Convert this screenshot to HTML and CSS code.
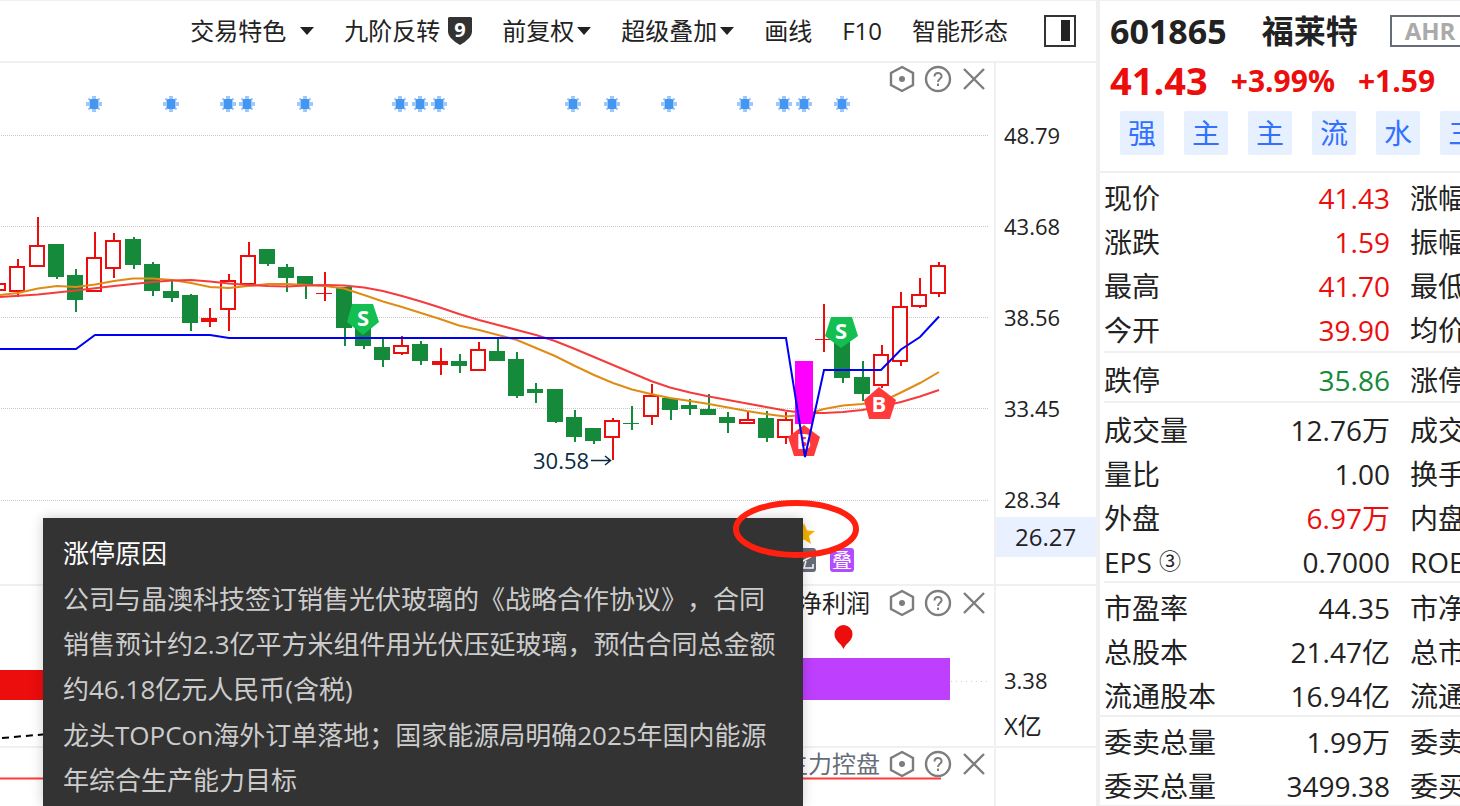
FILE: index.html
```html
<!DOCTYPE html>
<html lang="zh-CN">
<head>
    <meta charset="UTF-8">
    <meta name="viewport" content="width=device-width, initial-scale=1.0">
    <title>福莱特 601865</title>
    <link rel="stylesheet" href="styles.css">
</head>
<body>
    <!-- shared icons -->
    <svg class="sprite" aria-hidden="true">
        <symbol id="icon-setting" viewBox="0 0 28 28">
            <path d="M14 2 L25 8 V20 L14 26 L3 20 V8 Z" fill="none" stroke="#7d7d7d" stroke-width="2.4"/>
            <circle cx="14" cy="14" r="3" fill="#7d7d7d"/>
        </symbol>
        <symbol id="icon-help" viewBox="0 0 28 28">
            <circle cx="14" cy="14" r="12" fill="none" stroke="#7d7d7d" stroke-width="2.4"/>
            <path d="M10.5 11.5 C10.5 6.8 17.6 6.8 17.6 11.2 C17.6 13.8 14 13.8 14 17" fill="none" stroke="#7d7d7d" stroke-width="2"/>
            <rect x="13" y="18.6" width="2" height="2.4" fill="#7d7d7d"/>
        </symbol>
        <symbol id="icon-close" viewBox="0 0 28 28">
            <path d="M4 4 L24 24 M24 4 L4 24" fill="none" stroke="#7d7d7d" stroke-width="2.4"/>
        </symbol>
        <symbol id="icon-sun" viewBox="0 0 18 18">
            <path d="M9 1 V17 M1 9 H17" stroke="#9cc8fa" stroke-width="4"/>
            <path d="M3.5 3.5 L14.5 14.5 M14.5 3.5 L3.5 14.5" stroke="#8fbff8" stroke-width="2"/>
            <rect x="4" y="5" width="10" height="8" fill="#9cc8fa"/>
            <rect x="5" y="4" width="8" height="10" rx="1" fill="#4595f2"/>
        </symbol>
    </svg>

    <div class="app">
        <main class="main">
            <nav class="toolbar">
                <button class="tool wide-caret">交易特色<span class="caret"></span></button>
                <button class="tool">九阶反转
                    <svg class="nine" width="24" height="28" viewBox="0 0 24 28">
                        <path d="M1 0 H23 L24 1 V15 Q24 21 12 28 Q0 21 0 15 V1 Z" fill="#333"/>
                        <text x="12" y="20" text-anchor="middle" class="nine-text">9</text>
                    </svg>
                </button>
                <button class="tool">前复权<span class="caret"></span></button>
                <button class="tool">超级叠加<span class="caret"></span></button>
                <button class="tool">画线</button>
                <button class="tool">F10</button>
                <button class="tool">智能形态</button>
                <button class="tool layout-btn" aria-label="侧栏">
                    <svg width="32" height="32" viewBox="0 0 32 32">
                        <rect x="1" y="1" width="30" height="30" fill="none" stroke="#333" stroke-width="2"/>
                        <rect x="17" y="5" width="9" height="21" fill="#222"/>
                    </svg>
                </button>
            </nav>

            <section class="panel panel-k">
                <div class="plot">
                    <svg class="chart" id="kline" viewBox="0 63 994 521" preserveAspectRatio="xMinYMin meet">
                        <g class="grid">
                            <path d="M1 135.5 H988 M1 226.5 H988 M1 317.5 H988 M1 408.5 H988 M1 500.5 H988"/>
                        </g>
                        <g id="suns"></g>
                        <g id="candles" shape-rendering="crispEdges"></g>
                        <polyline class="ma ma-orange" points="0,295 18,293 38,288.5 57,286 76,287 95,284.5 114,281 133,278.5 153,278.5 172,280 191,283 210,287 229,288 248,286 268,284 287,284 306,285 325,286 344,288.5 364,295 383,301.5 402,307 421,313 440,319 459,325.5 479,330 498,335 517,340 536,348 555,356 575,366 594,375 613,383 632,389.5 651,394 670,398 690,401 709,404 728,407.5 747,411 766,414 785,416.5 804,415 824,409 843,405.5 862,404 881,402 901,392.5 920,383 939,372"/>
                        <polyline class="ma ma-red" points="0,297 38,294.5 76,290.5 114,286 133,284 153,282 172,280.5 191,280 210,281.5 229,283.5 248,285 268,286 287,286.5 306,285.5 325,285 344,285.5 364,287.5 383,291 402,296 421,301.5 440,307.5 459,314 479,320 498,325 517,330 536,335 555,341 575,349 594,357 613,365 632,373 651,381 670,387.5 690,392.5 709,396.5 728,400 747,403.5 766,407 785,410.5 804,413 824,413 843,412 862,410 881,406.5 901,402 920,396.5 939,390"/>
                        <rect x="795" y="361" width="18" height="63" fill="#f0f"/>

                        <!-- buy / sell marks -->
                        <path d="M352 304 H373 L379 322 L363 335 L347 322 Z" fill="#12bf50"/>
                        <text class="mark" x="363" y="326">S</text>
                        <path d="M831 317 H852 L858 336 L841 348 L825 336 Z" fill="#12bf50"/>
                        <text class="mark" x="841" y="339">S</text>
                        <path d="M804 425 L820 437 L814 456 H794 L788 437 Z" fill="#ff3a3a"/>
                        <text class="mark" x="804" y="449">B</text>
                        <path d="M879 387 L896 400 L890 419 H869 L864 400 Z" fill="#ff3a3a"/>
                        <text class="mark" x="879" y="412">B</text>
                        <polyline class="ma ma-blue" points="0,349 76,349 95,335 210,335 229,338 786,338 805,457 824,370 881,370 901,349.5 920,337 939,316.5"/>

                        <text class="low" x="533" y="469">30.58</text>
                        <path d="M591 460.5 H610 M605 456 L610.5 460.5 L605 465" fill="none" stroke="#0b2b42" stroke-width="1.5"/>

                        <!-- event badges -->
                        <path d="M804 523 L807 530.5 L815 531 L809 536 L811 544 L804 539.5 L797 544 L799 536 L793 531 L801 530.5 Z" fill="#f5b301"/>
                        <rect x="792" y="548" width="24" height="24" rx="3" fill="#666c78"/>
                        <path d="M796 565 L812 556 M800 553 H809 M806 561 L804 568 H813 V564" fill="none" stroke="#fff" stroke-width="1.5"/>
                        <rect x="830" y="548" width="24" height="24" rx="3" fill="#b14dff"/>
                        <text class="badge" x="842" y="568">叠</text>
                    </svg>
                    <div class="panel-head">
                        <button class="icon-btn" aria-label="设置"><svg width="28" height="28"><use href="#icon-setting"/></svg></button>
                        <button class="icon-btn" aria-label="帮助"><svg width="28" height="28"><use href="#icon-help"/></svg></button>
                        <button class="icon-btn" aria-label="关闭"><svg width="28" height="28"><use href="#icon-close"/></svg></button>
                    </div>
                </div>
                <div class="axis axis-price">
                    <span>48.79</span>
                    <span>43.68</span>
                    <span>38.56</span>
                    <span>33.45</span>
                    <span>28.34</span>
                    <b class="cursor-price">26.27</b>
                </div>
            </section>

            <section class="panel panel-profit">
                <div class="plot">
                    <svg class="chart" viewBox="0 586 994 160" preserveAspectRatio="xMinYMin meet">
                        <path d="M951 681.5 H988" stroke="#d0d0d0" stroke-dasharray="1 4"/>
                        <rect x="0" y="670" width="500" height="30" fill="#ec0d0d"/>
                        <rect x="500" y="658" width="450" height="42" fill="#bf3fff"/>
                        <path d="M2 738 L60 733" stroke="#000" stroke-width="2" stroke-dasharray="7 5"/>
                        <path d="M843.5 649 C841 643 834.5 641 834.5 634 A9 9 0 0 1 852.5 634 C852.5 641 846 643 843.5 649 Z" fill="#ec0d0d"/>
                    </svg>
                    <div class="panel-head">
                        <h2>净利润</h2>
                        <button class="icon-btn" aria-label="设置"><svg width="28" height="28"><use href="#icon-setting"/></svg></button>
                        <button class="icon-btn" aria-label="帮助"><svg width="28" height="28"><use href="#icon-help"/></svg></button>
                        <button class="icon-btn" aria-label="关闭"><svg width="28" height="28"><use href="#icon-close"/></svg></button>
                    </div>
                </div>
                <div class="axis axis-profit">
                    <span>3.38</span>
                    <span class="unit">X亿</span>
                </div>
            </section>

            <section class="panel panel-control">
                <div class="plot">
                    <svg class="chart" viewBox="0 748 994 58" preserveAspectRatio="xMinYMin meet">
                        <path d="M0 778.5 H941" stroke="#ff3a3a" stroke-width="2"/>
                    </svg>
                    <div class="panel-head">
                        <h2 class="muted">主力控盘</h2>
                        <button class="icon-btn" aria-label="设置"><svg width="28" height="28"><use href="#icon-setting"/></svg></button>
                        <button class="icon-btn" aria-label="帮助"><svg width="28" height="28"><use href="#icon-help"/></svg></button>
                        <button class="icon-btn" aria-label="关闭"><svg width="28" height="28"><use href="#icon-close"/></svg></button>
                    </div>
                </div>
                <div class="axis"></div>
            </section>

            <div class="tooltip" role="tooltip">
                <h3>涨停原因</h3>
                <p>公司与晶澳科技签订销售光伏玻璃的《战略合作协议》，合同销售预计约2.3亿平方米组件用光伏压延玻璃，预估合同总金额约46.18亿元人民币(含税)</p>
                <p>龙头TOPCon海外订单落地；国家能源局明确2025年国内能源年综合生产能力目标</p>
            </div>
            <svg class="circle-note" width="128" height="60" viewBox="0 0 128 60">
                <ellipse cx="64" cy="30" rx="60" ry="26" fill="none" stroke="#ff2010" stroke-width="6"/>
            </svg>
        </main>

        <aside class="sidebar">
            <header class="stock">
                <div class="stock-name">
                    <span class="code">601865</span>
                    <h1>福莱特</h1>
                    <button class="ahr">AHR</button>
                </div>
                <div class="stock-price">
                    <span class="price">41.43</span>
                    <span class="change">+3.99%</span>
                    <span class="change">+1.59</span>
                </div>
                <div class="tags">
                    <button class="tag">强</button>
                    <button class="tag">主</button>
                    <button class="tag">主</button>
                    <button class="tag">流</button>
                    <button class="tag">水</button>
                    <button class="tag">三</button>
                </div>
            </header>

            <table class="quote">
                <tr><th scope="row">现价</th><td class="up">41.43</td><th scope="row">涨幅</th></tr>
                <tr><th scope="row">涨跌</th><td class="up">1.59</td><th scope="row">振幅</th></tr>
                <tr><th scope="row">最高</th><td class="up">41.70</td><th scope="row">最低</th></tr>
                <tr><th scope="row">今开</th><td class="up">39.90</td><th scope="row">均价</th></tr>
            </table>
            <table class="quote quote-limit">
                <tr><th scope="row">跌停</th><td class="down">35.86</td><th scope="row">涨停</th></tr>
            </table>
            <table class="quote quote-volume">
                <tr><th scope="row">成交量</th><td>12.76万</td><th scope="row">成交</th></tr>
                <tr><th scope="row">量比</th><td>1.00</td><th scope="row">换手</th></tr>
                <tr><th scope="row">外盘</th><td class="up">6.97万</td><th scope="row">内盘</th></tr>
                <tr><th scope="row">EPS <small>③</small></th><td>0.7000</td><th scope="row">ROE</th></tr>
            </table>
            <table class="quote quote-flush">
                <tr><th scope="row">市盈率</th><td>44.35</td><th scope="row">市净</th></tr>
                <tr><th scope="row">总股本</th><td>21.47亿</td><th scope="row">总市</th></tr>
                <tr><th scope="row">流通股本</th><td>16.94亿</td><th scope="row">流通</th></tr>
            </table>
            <table class="quote quote-flush">
                <tr><th scope="row">委卖总量</th><td>1.99万</td><th scope="row">委卖</th></tr>
                <tr><th scope="row">委买总量</th><td>3499.38</td><th scope="row">委买</th></tr>
            </table>
        </aside>
    </div>

    <script>
        const NS = 'http://www.w3.org/2000/svg';
        const RED = '#ec0d0d';
        const GREEN = '#158a3a';

        // [direction, body top, body bottom, high, low]
        const candles = [
            ['u', 283, 291, 283, 291], ['u', 266, 292, 259, 297], ['u', 245, 267, 217, 267],
            ['d', 244, 277, 244, 279], ['d', 275, 300, 269, 312], ['u', 257, 292, 232, 292],
            ['u', 240, 269, 233, 278], ['d', 239, 265, 237, 269], ['d', 264, 291, 262, 296],
            ['d', 291, 298, 281, 302], ['d', 295, 323, 294, 331], ['u', 318, 322, 308, 327],
            ['u', 280, 310, 274, 331], ['u', 255, 285, 242, 285], ['d', 249, 264, 249, 266],
            ['d', 267, 278, 264, 292], ['d', 276, 285, 276, 299], ['u', 293, 294, 272, 301],
            ['d', 287, 328, 287, 346], ['d', 318, 346, 318, 349], ['d', 347, 360, 337, 367],
            ['u', 345, 354, 336, 355], ['d', 344, 361, 341, 365], ['u', 361, 365, 348, 375],
            ['d', 361, 366, 354, 373], ['u', 349, 371, 342, 371], ['d', 351, 361, 338, 361],
            ['d', 359, 396, 352, 398], ['d', 389, 393, 383, 403], ['d', 389, 422, 389, 423],
            ['d', 417, 437, 410, 442], ['d', 428, 441, 428, 444], ['u', 420, 438, 418, 460],
            ['d', 423, 424, 406, 430], ['u', 395, 417, 384, 425], ['d', 398, 410, 398, 420],
            ['d', 405, 409, 399, 415], ['d', 409, 415, 394, 415], ['d', 417, 423, 412, 433],
            ['u', 419, 424, 412, 424], ['d', 418, 438, 411, 442], ['u', 419, 438, 412, 444],
            null,
            ['u', 339, 340, 304, 352], ['d', 340, 378, 340, 383], ['d', 377, 394, 361, 401],
            ['u', 354, 386, 345, 388], ['u', 306, 362, 292, 366], ['u', 294, 307, 278, 308],
            ['u', 265, 294, 262, 297]
        ];
        const suns = [94, 171, 228, 247, 305, 400, 420, 439, 573, 612, 669, 745, 784, 804, 842];

        function add(parent, tag, attrs) {
            const el = document.createElementNS(NS, tag);
            for (const key in attrs) {
                el.setAttribute(key, attrs[key]);
            }
            parent.appendChild(el);
        }

        const group = document.getElementById('candles');
        candles.forEach(function(c, i) {
            if (!c) return;
            const [dir, top, bottom, high, low] = c;
            const x = Math.round(18.4 + (i - 1) * 19.1875);
            const color = dir === 'u' ? RED : GREEN;
            add(group, 'rect', { x: x - 1, y: high, width: 2, height: low - high, fill: color });
            add(group, 'rect', { x: x - 9, y: top, width: 16, height: bottom - top, fill: color });
            // rising candles are hollow
            if (dir === 'u' && bottom - top > 4) {
                add(group, 'rect', { x: x - 7, y: top + 2, width: 12, height: bottom - top - 4, fill: '#fff' });
            }
        });

        const sunGroup = document.getElementById('suns');
        suns.forEach(function(x) {
            add(sunGroup, 'use', { href: '#icon-sun', x: x - 9, y: 95, width: 18, height: 18 });
        });
    </script>
</body>
</html>
```
FILE: styles.css
```css
* {
    box-sizing: border-box;
}
body {
    font-family: "Open Sans", "Noto Sans CJK SC", sans-serif;
    font-size: 24px;
    margin: 0;
    color: #222;
    background-color: #fff;
    overflow: hidden;
}
button {
    font: inherit;
    color: inherit;
    background: none;
    border: none;
    padding: 0;
    cursor: pointer;
}
h1, h2, h3, p {
    margin: 0;
    font-weight: normal;
}
svg {
    display: block;
}
.sprite {
    width: 0;
    height: 0;
    position: absolute;
}
.app {
    display: flex;
    height: 100vh;
    border-top: 1px solid #f0f0f0;
}
.main {
    position: relative;
    flex: 1;
    min-width: 0;
    display: flex;
    flex-direction: column;
    overflow: hidden;
}

/* toolbar */
.toolbar {
    display: flex;
    flex: none;
    justify-content: flex-end;
    align-items: center;
    gap: 30px;
    height: 62px;
    padding-right: 20px;
    border-bottom: 2px solid #f0f0f0;
}
.tool {
    display: flex;
    align-items: center;
    white-space: nowrap;
    line-height: 32px;
}
.caret {
    margin-left: 3px;
    border: 7px solid transparent;
    border-top: 8px solid #222;
    border-bottom: 0;
}
.wide-caret .caret {
    margin-left: 14px;
}
.nine {
    margin-left: 8px;
}
.nine-text {
    font-size: 20px;
    font-weight: bold;
    fill: #fff;
}
.layout-btn {
    margin-left: 6px;
}

/* chart panels */
.panel {
    display: flex;
    flex: none;
    border-bottom: 2px solid #f0f0f0;
}
.panel-k {
    height: 523px;
}
.panel-profit {
    height: 162px;
}
.panel-control {
    flex: 1;
    border-bottom: none;
}
.plot {
    flex: 1;
    min-width: 0;
    display: grid;
    overflow: hidden;
}
.chart,
.panel-head {
    grid-area: 1 / 1;
}
.chart {
    width: 100%;
}
.panel-head {
    display: flex;
    justify-content: flex-end;
    align-items: center;
    align-self: start;
    gap: 8px;
    height: 32px;
    padding-right: 6px;
}
.panel-profit .panel-head {
    height: 34px;
}
.panel-head h2 {
    font-size: 24px;
    line-height: 32px;
    margin-right: 10px;
}
.panel-head .muted {
    color: #666c78;
    margin-right: 0;
}
.grid path {
    stroke: #c8c8c8;
    stroke-dasharray: 1 1;
}
.ma {
    fill: none;
    stroke-width: 2;
}
.ma-orange {
    stroke: #e08c14;
}
.ma-red {
    stroke: #f53c3c;
}
.ma-blue {
    stroke: #0000f5;
}
.mark {
    font-size: 22px;
    font-weight: bold;
    text-anchor: middle;
    fill: #fff;
}
.low {
    font-size: 22px;
    fill: #0b2b42;
}
.badge {
    font-size: 20px;
    text-anchor: middle;
    fill: #fff;
}

/* value axis */
.axis {
    position: relative;
    flex: 0 0 102px;
    display: flex;
    flex-direction: column;
    padding-left: 8px;
    border-left: 2px solid #f0f0f0;
    font-size: 22px;
}
.axis-price {
    padding-top: 27px;
}
.axis-price span {
    line-height: 91px;
}
.cursor-price {
    position: absolute;
    left: 0;
    right: 0;
    bottom: 27px;
    padding-left: 19px;
    font-size: 24px;
    font-weight: normal;
    line-height: 40px;
    background-color: #e9f0ff;
}
.axis-profit {
    padding-top: 72px;
    line-height: 45px;
}
.axis .unit {
    font-size: 24px;
}

/* limit-up reason */
.tooltip {
    position: absolute;
    left: 43px;
    top: 517px;
    bottom: 0;
    width: 760px;
    padding: 13px 20px;
    font-size: 26px;
    line-height: 45px;
    text-spacing-trim: space-all;
    color: #ccc;
    background-color: #333;
    box-shadow: 0 0 12px rgba(0, 0, 0, 0.2);
}
.tooltip h3 {
    font-size: 26px;
    color: #fff;
}
.tooltip h3,
.tooltip p {
    margin-bottom: 1px;
}
.circle-note {
    position: absolute;
    left: 732px;
    top: 498px;
}

/* quote sidebar */
.sidebar {
    flex: 0 0 364px;
    min-width: 0;
    border-left: 4px solid #f0f0f0;
    overflow: hidden;
}
.stock {
    height: 172px;
    padding: 6px 0 0 10px;
    border-bottom: 2px solid #f0f0f0;
    font-weight: bold;
    white-space: nowrap;
}
.stock-name,
.stock-price {
    display: flex;
    align-items: center;
    height: 50px;
}
.stock-name {
    height: 48px;
}
.stock-name h1 {
    font-size: 32px;
    font-weight: bold;
    line-height: 46px;
    margin: 0 32px 0 35px;
}
.code {
    font-size: 34px;
}
.ahr {
    flex: none;
    width: 100px;
    height: 32px;
    padding-left: 13px;
    line-height: 28px;
    text-align: left;
    color: #aaa;
    border: 2px solid #666c78;
}
.stock-price {
    gap: 23px;
    color: #ec0d0d;
}
.price {
    font-size: 38px;
}
.change {
    font-size: 30px;
}
.tags {
    display: flex;
    gap: 20px;
    padding: 6px 0 0 10px;
}
.tag {
    flex: none;
    width: 44px;
    height: 44px;
    border-radius: 2px;
    font-size: 28px;
    font-weight: normal;
    line-height: 44px;
    color: #3370ff;
    background-color: #e6f0ff;
}
.quote {
    display: block;
    margin-left: 4px;
    padding-bottom: 2px;
    border-spacing: 0;
    border-bottom: 2px solid #f0f0f0;
    font-size: 28px;
}
.quote tbody {
    display: block;
}
.quote tr {
    display: grid;
    grid-template-columns: 120px 1fr 50px;
    align-items: center;
    height: 44px;
    padding-top: 5px;
}
.quote th,
.quote td {
    padding: 0;
    font-weight: normal;
    line-height: 40px;
    white-space: nowrap;
}
.quote th {
    text-align: left;
}
.quote td {
    text-align: right;
    padding-right: 20px;
}
.quote small {
    font-size: 22px;
    line-height: 1;
    vertical-align: 4px;
}
.quote-limit {
    padding-top: 2px;
}
.quote-volume {
    padding-top: 2px;
    padding-bottom: 0;
}
.quote-flush {
    margin-left: 0;
    padding-left: 4px;
    padding-bottom: 0;
}
.up {
    color: #ec0d0d;
}
.down {
    color: #158a3a;
}
```
